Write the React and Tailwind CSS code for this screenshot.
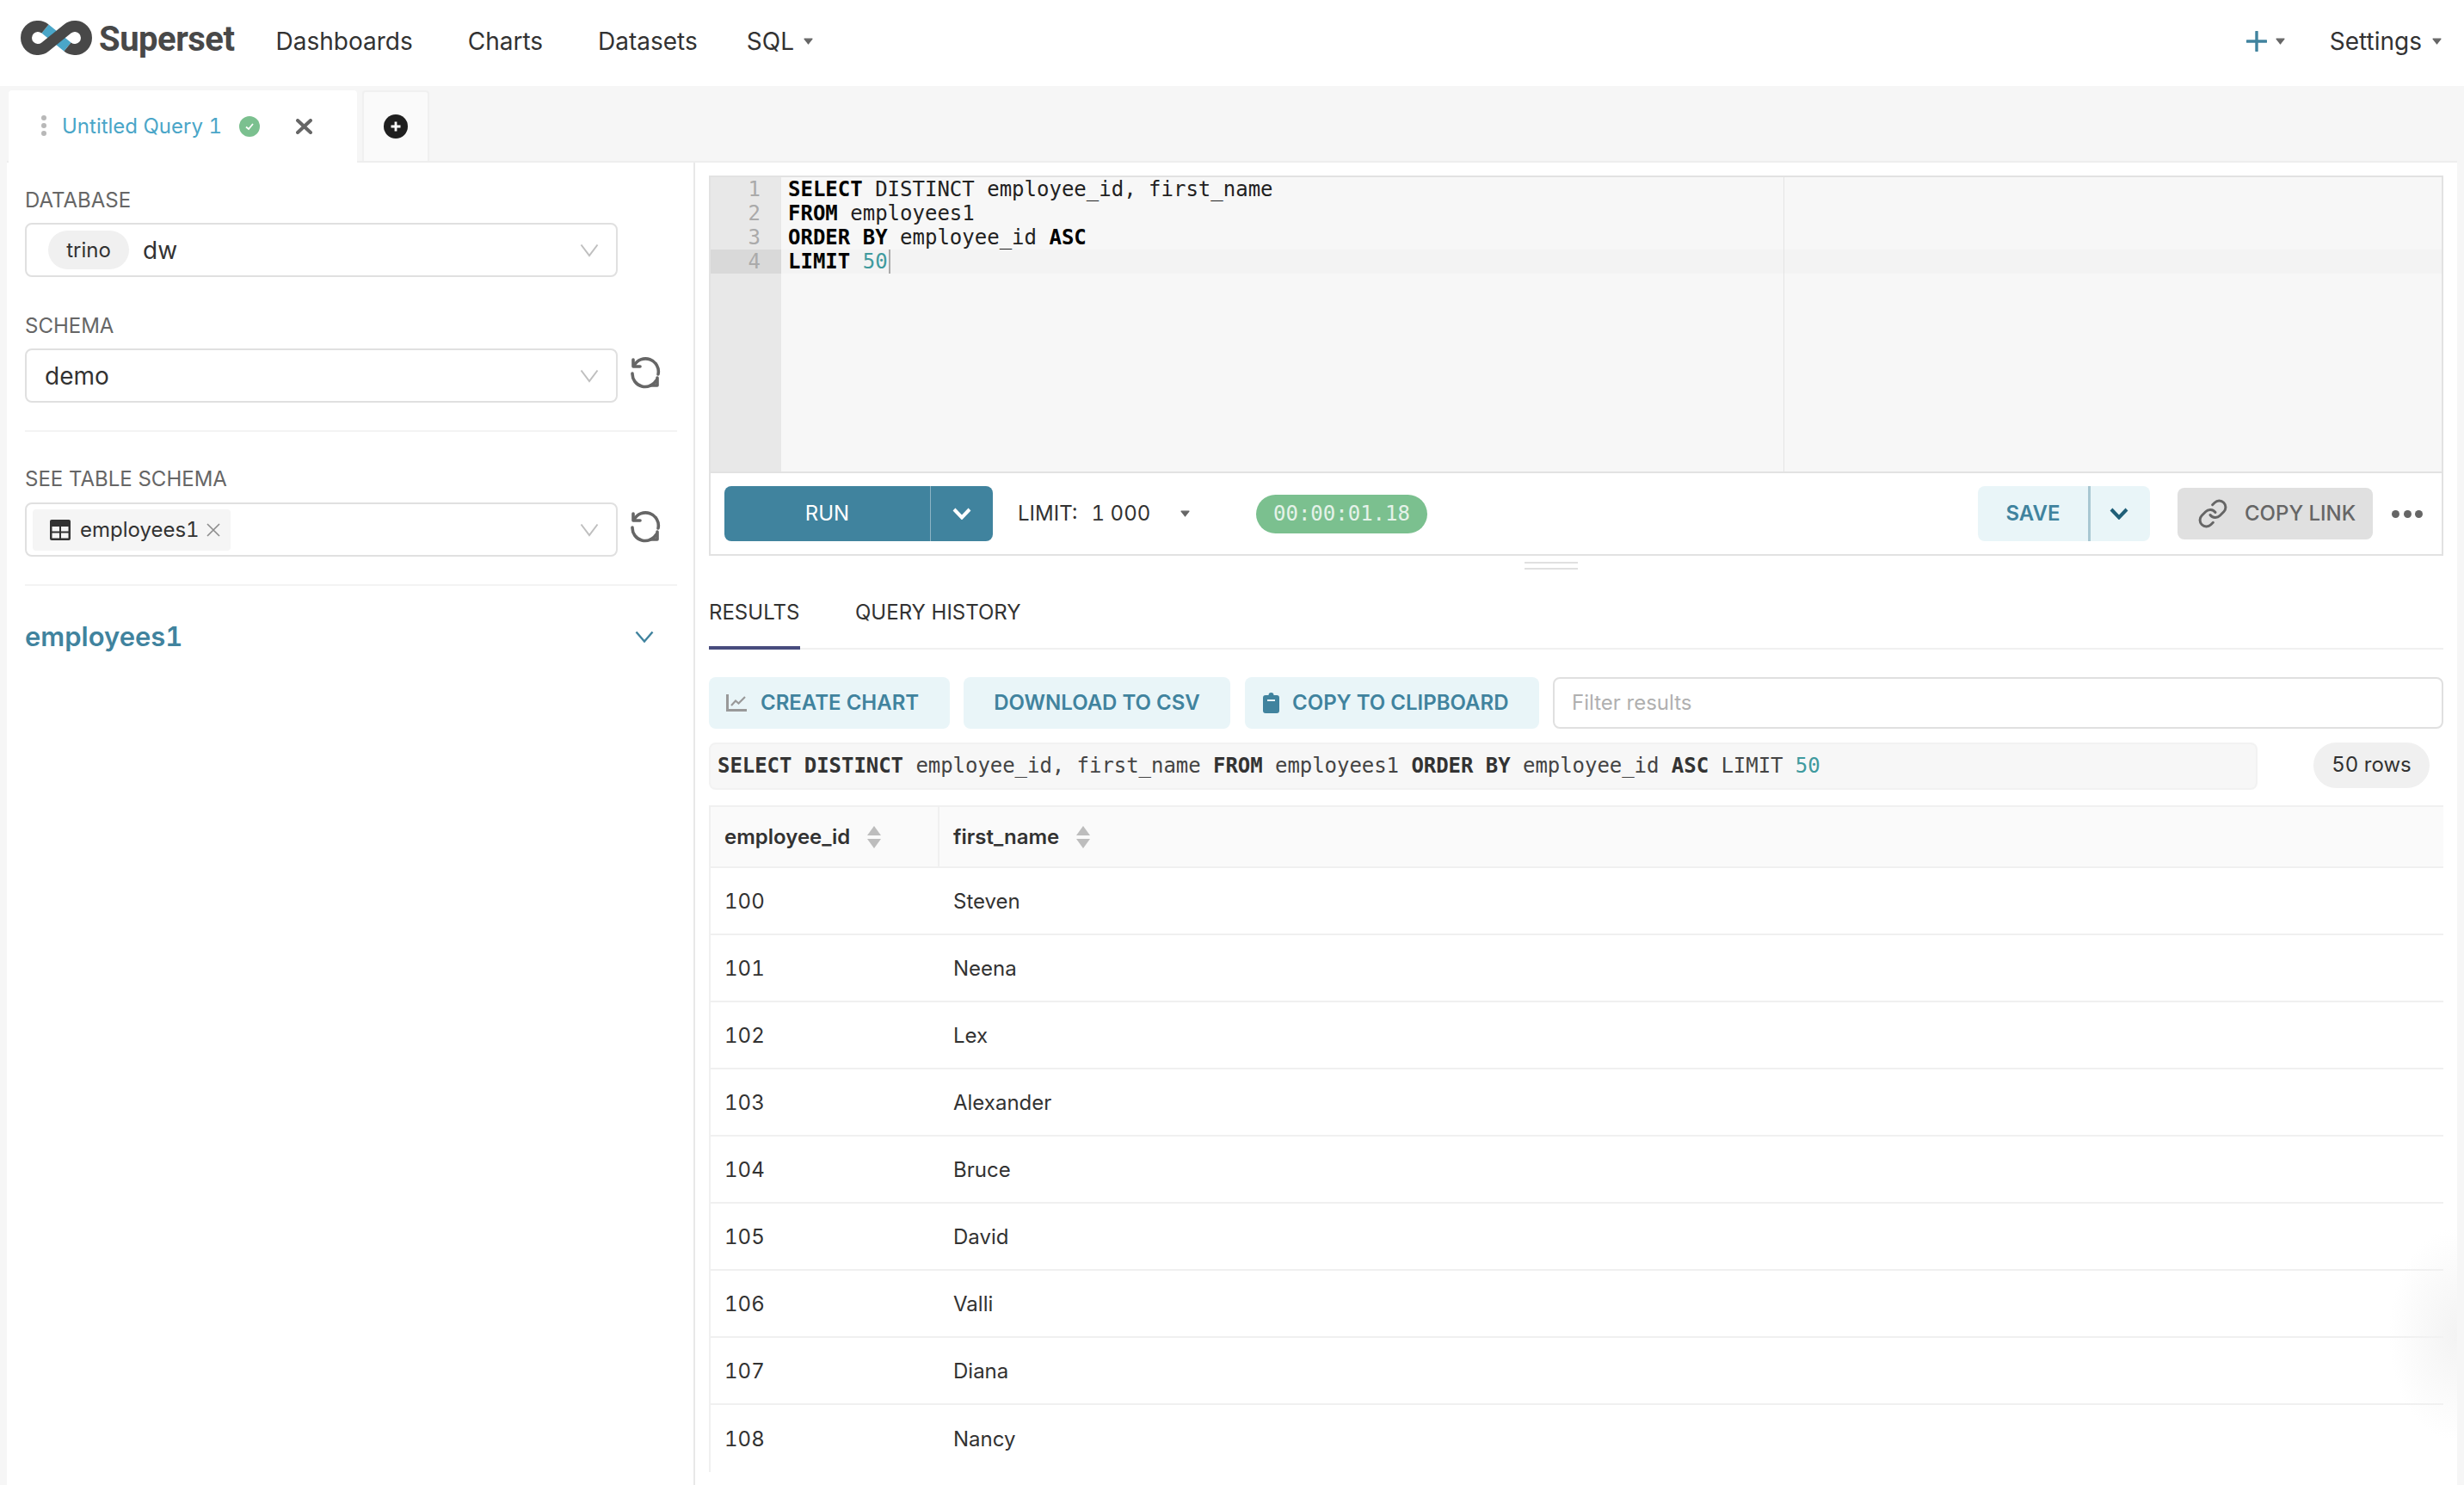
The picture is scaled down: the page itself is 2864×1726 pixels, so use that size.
import { Link } from 'lucide-react';

const rows = [
  ['100', 'Steven'],
  ['101', 'Neena'],
  ['102', 'Lex'],
  ['103', 'Alexander'],
  ['104', 'Bruce'],
  ['105', 'David'],
  ['106', 'Valli'],
  ['107', 'Diana'],
  ['108', 'Nancy'],
];

function Logo() {
  return (
    <svg width="83" height="40" viewBox="0 0 83 40" fill="none" className="-mt-[8px]">
      <path d="M28.5 9.5 L54.5 30.5" stroke="#4aa6c8" strokeWidth="13" />
      <path
        d="M28.5 9.5 A13.5 13.5 0 1 0 28.5 30.5 L54.5 9.5 A13.5 13.5 0 1 1 54.5 30.5"
        stroke="#484848"
        strokeWidth="13"
      />
    </svg>
  );
}

function Caret({ className = '' }) {
  return (
    <svg width="11" height="8" viewBox="0 0 11 8" className={className}>
      <path d="M1 1.2 H10 L5.5 7 Z" fill="#666" stroke="#666" strokeWidth="1.2" strokeLinejoin="round" />
    </svg>
  );
}

function SelectChevron() {
  return (
    <svg width="22" height="16" viewBox="0 0 22 16" fill="none">
      <path d="M1.5 1.5 L11 14 L20.5 1.5" stroke="#bfbfbf" strokeWidth="2" />
    </svg>
  );
}

function BoldChevron({ color }) {
  return (
    <svg width="22" height="14" viewBox="0 0 22 14" fill="none">
      <path d="M2 2 L11 11.5 L20 2" stroke={color} strokeWidth="4" />
    </svg>
  );
}

function RefreshIcon() {
  return (
    <svg width="80" height="60" viewBox="0 0 80 60" fill="none" className="-mx-[25px] -translate-y-[5px]">
      <g stroke="#666" strokeWidth="3.6" strokeLinecap="round" strokeLinejoin="round">
        <path d="M17 23 A15 15 0 0 1 45 33" />
        <path d="M16 16 V24 H24" />
        <path d="M15 32 A15 15 0 0 0 43 40" />
        <path d="M44 37 V46 H36" />
      </g>
    </svg>
  );
}

function TableIcon() {
  return (
    <svg width="24" height="24" viewBox="0 0 24 24">
      <rect x="0" y="0" width="24" height="24" rx="2" fill="#323232" />
      <rect x="2.5" y="8" width="8.5" height="5.5" fill="#f5f5f5" />
      <rect x="13" y="8" width="8.5" height="5.5" fill="#f5f5f5" />
      <rect x="2.5" y="15.5" width="8.5" height="6" fill="#f5f5f5" />
      <rect x="13" y="15.5" width="8.5" height="6" fill="#f5f5f5" />
    </svg>
  );
}

function ChartIcon() {
  return (
    <svg width="24" height="20" viewBox="0 0 24 20" fill="none" stroke="#999">
      <path d="M1.5 0 V18.5 H24" strokeWidth="3" />
      <path d="M6 13 L11 7.5 L14.5 10.5 L22 3" strokeWidth="2.2" />
    </svg>
  );
}

function ClipboardIcon() {
  return (
    <svg width="19" height="24" viewBox="0 0 19 24">
      <path d="M6.5 3 A3 3 0 0 1 12.5 3 H16 A3 3 0 0 1 19 6 V21 A3 3 0 0 1 16 24 H3 A3 3 0 0 1 0 21 V6 A3 3 0 0 1 3 3 Z" fill="#40839e" />
      <rect x="5" y="8" width="9" height="2" fill="#e9f5f8" />
    </svg>
  );
}

function SortIcon() {
  return (
    <svg width="16" height="26" viewBox="0 0 16 26" fill="#bdbdbd">
      <path d="M8 0 L16 11 H0 Z" />
      <path d="M0 15 H16 L8 26 Z" />
    </svg>
  );
}

function Label({ children, className = '' }) {
  return <div className={`h-[32px] text-[24px] leading-[32px] text-[#666] ${className}`}>{children}</div>;
}

function Select({ children }) {
  return (
    <div className="flex h-[63px] w-[689px] shrink-0 items-center justify-between rounded-[8px] border-2 border-[#e0e0e0] bg-white pr-[20px]">
      <div className="flex items-center">{children}</div>
      <SelectChevron />
    </div>
  );
}

function ActionButton({ className, children }) {
  return (
    <div
      className={`flex h-[60px] shrink-0 items-center rounded-[8px] bg-[#e9f5f8] text-[24px] font-semibold text-[#40839e] ${className}`}
    >
      {children}
    </div>
  );
}

export default function App() {
  const kw = 'font-bold text-black';
  return (
    <div className="flex h-screen w-full flex-col overflow-hidden bg-[#f6f6f6] font-['Inter',sans-serif] text-[#323232]">
      {/* top nav */}
      <header className="flex h-[100px] shrink-0 items-center bg-white pb-[5px] pl-[24px] pr-[26px]">
        <Logo />
        <span className="-mt-[3px] ml-[8px] font-['Roboto',sans-serif] text-[40px] font-bold leading-none tracking-[-0.5px] text-[#484848]">
          Superset
        </span>
        <nav className="ml-[48px] flex items-center gap-[64px] text-[28px]">
          <span>Dashboards</span>
          <span>Charts</span>
          <span>Datasets</span>
        </nav>
        <div className="ml-[57px] flex items-center gap-[11px] text-[28px]">
          <span>SQL</span>
          <Caret />
        </div>
        <div className="ml-auto flex items-center">
          <svg width="24" height="24" viewBox="0 0 24 24" fill="none">
            <path d="M12 1 V23 M1 12 H23" stroke="#40839e" strokeWidth="3.4" strokeLinecap="round" />
          </svg>
          <Caret className="ml-[10px]" />
          <span className="ml-[52px] text-[28px]">Settings</span>
          <Caret className="ml-[12px]" />
        </div>
      </header>

      {/* query tabs */}
      <div className="flex h-[87px] shrink-0 gap-[6px] pl-[10px] pt-[5px]">
        <div className="relative z-10 flex h-[84px] w-[405px] items-center rounded-t-[4px] bg-white pl-[38px]">
          <div className="-mt-[2px] flex flex-col gap-[3px]">
            <span className="size-[6px] rounded-full bg-[#b8b8b8]" />
            <span className="size-[6px] rounded-full bg-[#b8b8b8]" />
            <span className="size-[6px] rounded-full bg-[#b8b8b8]" />
          </div>
          <span className="ml-[18px] text-[24px] tabular-nums text-[#4aa6c8]">Untitled Query 1</span>
          <svg width="24" height="24" viewBox="0 0 24 24" className="ml-[20px]">
            <circle cx="12" cy="12" r="12" fill="#7bc08f" />
            <path d="M8 12.5 L11 15 L16 9" stroke="white" strokeWidth="1.8" fill="none" />
          </svg>
          <svg width="19" height="18" viewBox="0 0 19 18" className="ml-[42px]">
            <path d="M2 2 L17 16 M17 2 L2 16" stroke="#666" strokeWidth="4" strokeLinecap="round" />
          </svg>
        </div>
        <div className="flex h-[82px] w-[78px] items-center justify-center rounded-t-[4px] border-x-2 border-t-2 border-[#f0f0f0] bg-[#fafafa]">
          <svg width="28" height="28" viewBox="0 0 28 28">
            <circle cx="14" cy="14" r="14" fill="#1f1f1f" />
            <path d="M14 8.5 V19.5 M8.5 14 H19.5" stroke="white" strokeWidth="2.8" />
          </svg>
        </div>
      </div>

      <main className="relative mx-[8px] flex min-h-0 flex-1 border-t-2 border-[#eee] bg-white">
        {/* left panel */}
        <aside className="w-[800px] shrink-0 border-r-2 border-[#e8e8e8] pl-[21px] pr-[19px] pt-[28px]">
          <Label>DATABASE</Label>
          <div className="mt-[10px]">
            <Select>
              <span className="ml-[25px] flex h-[45px] w-[94px] items-center justify-center rounded-full bg-[#f0f0f0] text-[24px]">
                trino
              </span>
              <span className="ml-[16px] text-[28px]">dw</span>
            </Select>
          </div>
          <Label className="mt-[41px]">SCHEMA</Label>
          <div className="mt-[10px] flex items-center">
            <Select>
              <span className="ml-[21px] text-[28px]">demo</span>
            </Select>
            <div className="ml-[27px]">
              <RefreshIcon />
            </div>
          </div>
          <div className="mt-[32px] h-[2px] bg-[#f3f3f3]" />
          <Label className="mt-[39px]">SEE TABLE SCHEMA</Label>
          <div className="mt-[11px] flex items-center">
            <Select>
              <span className="ml-[7px] flex h-[48px] w-[230px] items-center rounded-[4px] bg-[#f5f5f5] pl-[20px]">
                <TableIcon />
                <span className="ml-[11px] text-[24px] tabular-nums">employees1</span>
                <svg width="16" height="16" viewBox="0 0 16 16" className="ml-[8px]">
                  <path d="M1 1 L15 15 M15 1 L1 15" stroke="#8c8c8c" strokeWidth="1.6" />
                </svg>
              </span>
            </Select>
            <div className="ml-[27px]">
              <RefreshIcon />
            </div>
          </div>
          <div className="mt-[32px] h-[2px] bg-[#f3f3f3]" />
          <div className="mt-[37px] flex h-[44px] items-center justify-between pr-[27px]">
            <span className="text-[31px] font-semibold tabular-nums text-[#40839e]">employees1</span>
            <svg width="22" height="14" viewBox="0 0 22 14" fill="none">
              <path d="M1.5 1.5 L11 12.5 L20.5 1.5" stroke="#40839e" strokeWidth="2.4" />
            </svg>
          </div>
        </aside>

        {/* right panel */}
        <section className="min-w-0 flex-1 px-[16px] pt-[15px]">
          <div className="border-2 border-[#e2e2e2]">
            <div className="relative flex h-[344px] border-b-2 border-[#e2e2e2] bg-[#f7f7f7]">
              <div className="w-[82px] shrink-0 bg-[#e8e8e8] font-['DejaVu_Sans_Mono',monospace] text-[24px] leading-[28px] text-[#aaa]">
                <div className="h-[28px] pr-[24px] text-right">1</div>
                <div className="h-[28px] pr-[24px] text-right">2</div>
                <div className="h-[28px] pr-[24px] text-right">3</div>
                <div className="h-[28px] bg-[#d9d9d9] pr-[24px] text-right">4</div>
              </div>
              <div className="flex-1 whitespace-pre font-['DejaVu_Sans_Mono',monospace] text-[24px] leading-[28px] text-[#222]">
                <div className="h-[28px] pl-[8px]">
                  <span className={kw}>SELECT</span> DISTINCT employee_id, first_name
                </div>
                <div className="h-[28px] pl-[8px]">
                  <span className={kw}>FROM</span> employees1
                </div>
                <div className="h-[28px] pl-[8px]">
                  <span className={kw}>ORDER BY</span> employee_id <span className={kw}>ASC</span>
                </div>
                <div className="h-[28px] bg-[#f3f3f3] pl-[8px]">
                  <span className={kw}>LIMIT</span> <span className="text-[#3f9a9e]">50</span>
                  <span className="ml-[1px] inline-block h-[28px] w-[2px] bg-[#aaa] align-top" />
                </div>
              </div>
              {/* print margin */}
              <div className="absolute bottom-0 left-[1247px] top-0 w-[1px] bg-[#e4e4e4]" />
            </div>
            <div className="flex h-[94px] items-center pl-[16px] pr-[22px]">
              <div className="flex h-[64px] w-[312px] rounded-[8px] bg-[#40839e] text-white">
                <span className="flex w-[240px] items-center justify-center border-r border-[#8db4c4] text-[24px]">RUN</span>
                <span className="flex flex-1 items-center justify-center">
                  <BoldChevron color="white" />
                </span>
              </div>
              <div className="ml-[29px] flex w-[277px] items-center text-[24px]">
                <span>LIMIT:</span>
                <span className="ml-[16px] tabular-nums">1 000</span>
                <Caret className="ml-[35px]" />
              </div>
              <div className="flex h-[45px] w-[199px] items-center justify-center rounded-full bg-[#7bc08f] font-['DejaVu_Sans_Mono',monospace] text-[24px] text-white/80">
                00:00:01.18
              </div>
              <div className="ml-auto flex h-[64px] w-[200px] rounded-[8px] bg-[#e9f5f8]">
                <span className="flex w-[131px] items-center justify-center border-r-[3px] border-[#a8c7d2] text-[24px] font-semibold text-[#40839e]">
                  SAVE
                </span>
                <span className="flex flex-1 items-center justify-center pr-[3px]">
                  <BoldChevron color="#1f5f78" />
                </span>
              </div>
              <div className="ml-[32px] flex h-[60px] w-[227px] items-center rounded-[8px] bg-[#e0e0e0] pl-[23px] text-[24px] font-medium text-[#666]">
                <Link size={36} color="#666" strokeWidth={2} />
                <span className="ml-[19px]">COPY LINK</span>
              </div>
              <div className="ml-[22px] flex w-[36px] justify-between">
                <span className="size-[9px] rounded-full bg-[#666]" />
                <span className="size-[9px] rounded-full bg-[#666]" />
                <span className="size-[9px] rounded-full bg-[#666]" />
              </div>
            </div>
          </div>

          {/* drag handle */}
          <div className="flex h-[16px] flex-col gap-[5px] pl-[948px] pt-[7px]">
            <div className="h-[2px] w-[62px] bg-[#e0e0e0]" />
            <div className="h-[2px] w-[62px] bg-[#e0e0e0]" />
          </div>

          {/* results tabs */}
          <div className="flex h-[93px] border-b-2 border-[#f0f0f0] text-[24px]">
            <div className="h-[93px] w-[106px] border-b-4 border-[#484c7e] pt-[34px] leading-[32px]">RESULTS</div>
            <div className="ml-[64px] pt-[34px] leading-[32px]">QUERY HISTORY</div>
          </div>

          <div className="mt-[32px] flex gap-[16px]">
            <ActionButton className="w-[280px] pl-[20px]">
              <ChartIcon />
              <span className="ml-[16px]">CREATE CHART</span>
            </ActionButton>
            <ActionButton className="w-[310px] justify-center">DOWNLOAD TO CSV</ActionButton>
            <ActionButton className="ml-[1px] w-[342px] pl-[21px]">
              <ClipboardIcon />
              <span className="ml-[15px]">COPY TO CLIPBOARD</span>
            </ActionButton>
            <div className="flex h-[60px] flex-1 items-center rounded-[8px] border-2 border-[#e0e0e0] pl-[20px] text-[24px] text-[#b0b0b0]">
              Filter results
            </div>
          </div>

          <div className="mt-[16px] flex items-start justify-between pr-[16px]">
            <div className="flex h-[55px] w-[1800px] items-center whitespace-pre rounded-[8px] border-2 border-[#f2f2f2] bg-[#f7f7f7] pb-[2px] pl-[8px] font-['DejaVu_Sans_Mono',monospace] text-[24px] tracking-[-0.05px] text-[#444]">
              <span className="font-bold text-[#333]">SELECT DISTINCT</span> employee_id, first_name{' '}
              <span className="font-bold text-[#333]">FROM</span> employees1{' '}
              <span className="font-bold text-[#333]">ORDER BY</span> employee_id{' '}
              <span className="font-bold text-[#333]">ASC</span> LIMIT <span className="text-[#3f9a9e]">50</span>
            </div>
            <div className="flex h-[53px] w-[135px] items-center justify-center rounded-full bg-[#f0f0f0] pb-[1px] text-[24px] tabular-nums">
              50 rows
            </div>
          </div>

          {/* result table */}
          <div className="mt-[18px] border-l-2 border-t-2 border-[#f0f0f0] text-[24px] tabular-nums">
            <div className="flex h-[71px] border-b-2 border-[#f0f0f0] bg-[#fafafa] font-semibold">
              <div className="flex w-[266px] items-center gap-[20px] border-r-2 border-[#f0f0f0] pl-[16px]">
                <span>employee_id</span>
                <SortIcon />
              </div>
              <div className="flex items-center gap-[20px] pl-[16px]">
                <span>first_name</span>
                <SortIcon />
              </div>
            </div>
            {rows.map(([id, name], i) => (
              <div
                key={id}
                className={
                  i === rows.length - 1
                    ? 'flex h-[78px] items-center pt-[1px]'
                    : 'flex h-[78px] items-center border-b-2 border-[#f0f0f0] pt-[1px]'
                }
              >
                <div className="w-[266px] pl-[16px]">{id}</div>
                <div className="pl-[16px]">{name}</div>
              </div>
            ))}
          </div>
        </section>

        {/* faint shade at the window edge */}
        <div className="pointer-events-none absolute bottom-[50px] right-0 h-[250px] w-[80px] bg-[radial-gradient(ellipse_at_right,#f3f3f3,transparent_70%)]" />
      </main>
    </div>
  );
}
